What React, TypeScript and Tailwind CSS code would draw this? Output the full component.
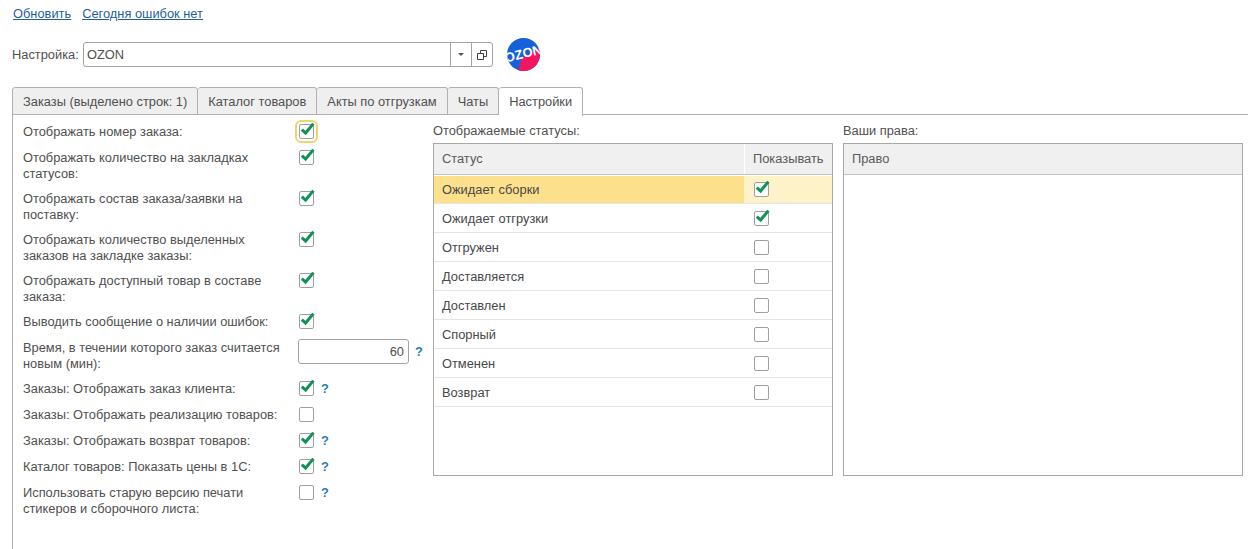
import { ReactNode } from "react";

const tabs = ["Заказы (выделено строк: 1)", "Каталог товаров", "Акты по отгрузкам", "Чаты", "Настройки"];

const statuses = [
  { name: "Ожидает сборки", on: true },
  { name: "Ожидает отгрузки", on: true },
  { name: "Отгружен", on: false },
  { name: "Доставляется", on: false },
  { name: "Доставлен", on: false },
  { name: "Спорный", on: false },
  { name: "Отменен", on: false },
  { name: "Возврат", on: false },
];

function Check({ on, focus }: { on: boolean; focus?: boolean }) {
  return (
    <span
      className={
        "relative block w-[15px] h-[15px] shrink-0 rounded-[2px] border border-[#a0a0a0] bg-white " +
        (focus ? "outline-2 outline-offset-[2px] outline-[#ecd56f]" : "")
      }
    >
      {on && (
        <svg className="absolute left-[0px] top-[-3px]" width="16" height="16" viewBox="0 0 16 16" fill="none">
          <path d="M1.8 7.6 L5.6 11 L13.4 1.6" stroke="#0f9157" strokeWidth="3" />
        </svg>
      )}
    </span>
  );
}

function Help() {
  return <span className="text-[#2a7fb0] font-bold leading-4">?</span>;
}

function Row({ label, on, help, focus, tall }: { label: ReactNode; on: boolean; help?: boolean; focus?: boolean; tall?: boolean }) {
  return (
    <div className={"flex items-start " + (tall ? "h-8" : "h-[17px]")}>
      <div className="w-[275px] leading-4 pt-px whitespace-nowrap">{label}</div>
      <div className="ml-px mt-px">
        <Check on={on} focus={focus} />
      </div>
      {help && <div className="ml-[7px] -mt-px"><Help /></div>}
    </div>
  );
}

function TableHead({ children }: { children: ReactNode }) {
  return <div className="flex h-[31px] bg-[#f0f0f0] border-b border-[#c4c4c4] text-[#5a5a5a]">{children}</div>;
}

function Logo() {
  return (
    <svg width="33" height="33" viewBox="0 0 33 33" className="ml-[14px]">
      <defs>
        <clipPath id="ozonClip">
          <circle cx="16.5" cy="16.5" r="16.5" />
        </clipPath>
      </defs>
      <g clipPath="url(#ozonClip)">
        <rect width="33" height="33" fill="#1660dc" />
        <path d="M11 33 L15 20 L33 10 L33 33 Z" fill="#f4155f" />
        <text
          x="16.5"
          y="20"
          textAnchor="middle"
          fontSize="13"
          fontWeight="700"
          fill="#ffffff"
          fontFamily="'Liberation Sans', sans-serif"
          transform="rotate(-14 16.5 16.5)"
        >
          OZON
        </text>
      </g>
    </svg>
  );
}

export default function App() {
  return (
    <div className="w-[1248px] h-[549px] overflow-hidden bg-white text-[12.85px] text-[#505050] font-['Liberation_Sans',Arial,sans-serif] flex flex-col">
      <div className="flex gap-[11px] pl-[13px] pt-[6px] leading-4 text-[#1f5f9e] underline">
        <a href="#">Обновить</a>
        <a href="#">Сегодня ошибок нет</a>
      </div>

      <div className="flex items-center pl-3 mt-5 h-[25px]">
        <div className="w-[71px]">Настройка:</div>
        <div className="flex w-[410px] h-[25px] rounded-[3px] border border-[#a3a3a3] bg-white">
          <div className="flex-1 pl-[3px] leading-[24px]">OZON</div>
          <div className="w-[21px] border-l border-[#a3a3a3] flex items-center justify-center">
            <span className="w-0 h-0 border-x-[3px] border-x-transparent border-t-[3px] border-t-[#555555]" />
          </div>
          <div className="w-[21px] border-l border-[#a3a3a3] flex items-center justify-center">
            <svg width="10" height="10" viewBox="0 0 10 10" fill="none" stroke="#444444">
              <path d="M3.5 3 V0.5 H9.5 V6.5 H7" />
              <path d="M0.5 3.5 H6.5 V9.5 H0.5 Z" />
            </svg>
          </div>
        </div>
        <Logo />
      </div>

      <div className="flex pl-3 mt-5 h-[28px]">
        {tabs.map((t, i) => {
          const active = i === tabs.length - 1;
          return (
            <div
              key={t}
              className={
                "px-[10px] leading-[27px] border border-l-0 first:border-l border-[#b0b0b0] rounded-t-[3px] whitespace-nowrap " +
                (active ? "bg-white border-b-0 h-[29px] relative z-10" : "bg-[#efefef]")
              }
            >
              {t}
            </div>
          );
        })}
        <div className="flex-1 border-b border-[#b0b0b0]" />
      </div>

      <div className="flex-1 ml-3 border-l border-t border-[#b0b0b0] flex pl-[10px] pt-2 -mt-px">
        <div className="w-[410px] shrink-0 flex flex-col gap-[9px]">
          <Row label="Отображать номер заказа:" on focus />
          <Row tall label={<>Отображать количество на закладках<br />статусов:</>} on />
          <Row tall label={<>Отображать состав заказа/заявки на<br />поставку:</>} on />
          <Row tall label={<>Отображать количество выделенных<br />заказов на закладке заказы:</>} on />
          <Row tall label={<>Отображать доступный товар в составе<br />заказа:</>} on />
          <Row label="Выводить сообщение о наличии ошибок:" on />
          <div className="flex items-start h-8">
            <div className="w-[275px] leading-4 pt-px whitespace-nowrap">Время, в течении которого заказ считается<br />новым (мин):</div>
            <div className="w-[111px] h-[25px] rounded-[3px] border border-[#a3a3a3] text-right pr-1 leading-[24px]">60</div>
            <div className="ml-[6px] mt-[3px]"><Help /></div>
          </div>
          <Row label="Заказы: Отображать заказ клиента:" on help />
          <Row label="Заказы: Отображать реализацию товаров:" on={false} />
          <Row label="Заказы: Отображать возврат товаров:" on help />
          <Row label="Каталог товаров: Показать цены в 1С:" on help />
          <Row tall label={<>Использовать старую версию печати<br />стикеров и сборочного листа:</>} on={false} help />
        </div>

        <div className="w-[400px] shrink-0 flex flex-col">
          <div className="leading-4 mb-1">Отображаемые статусы:</div>
          <div className="h-[333px] border border-[#a8a8a8]">
            <TableHead>
              <div className="w-[310px] pl-2 leading-[30px]">Статус</div>
              <div className="flex-1 border-l border-white pl-[8px] leading-[30px] whitespace-nowrap">Показывать</div>
            </TableHead>
            {statuses.map((s, i) => (
              <div key={s.name} className="h-[29px] border-b border-[#e4e4e4] flex pt-px">
                <div className={"w-[310px] pl-2 h-[27px] leading-[28px] text-[#484848] " + (i === 0 ? "bg-[#fde08c]" : "")}>{s.name}</div>
                <div className={"flex-1 pl-[10px] pt-[6px] h-[27px] " + (i === 0 ? "bg-[#fef3c8]" : "")}>
                  <Check on={s.on} />
                </div>
              </div>
            ))}
          </div>
        </div>

        <div className="w-[400px] shrink-0 flex flex-col ml-[10px]">
          <div className="leading-4 mb-1">Ваши права:</div>
          <div className="h-[333px] border border-[#a8a8a8]">
            <TableHead>
              <div className="pl-2 leading-[30px]">Право</div>
            </TableHead>
          </div>
        </div>
      </div>
    </div>
  );
}
